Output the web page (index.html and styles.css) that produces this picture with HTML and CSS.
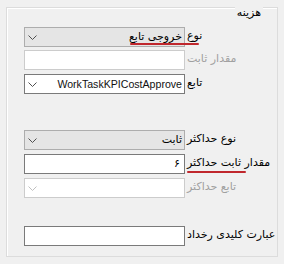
FILE: index.html
```html
<!DOCTYPE html>
<html lang="fa">
<head>
<meta charset="utf-8">
<link rel="stylesheet" href="styles.css">
</head>
<body>
<div class="group">
  <span class="legend" dir="rtl">هزینه</span>
  <div class="form">
    <div class="row r1">
      <div class="combo grey"><svg class="chev" width="9" height="5" viewBox="0 0 9 5"><polyline points="0.5,0.5 4.5,4.5 8.5,0.5"/></svg><span class="val" dir="rtl">خروجی تابع</span></div>
      <span class="lbl" dir="rtl">نوع</span>
    </div>
    <div class="row r2">
      <div class="text disabled"></div>
      <span class="lbl off" dir="rtl">مقدار ثابت</span>
    </div>
    <div class="row r3">
      <div class="combo edit"><svg class="chev" width="9" height="5" viewBox="0 0 9 5"><polyline points="0.5,0.5 4.5,4.5 8.5,0.5"/></svg><span class="val">WorkTaskKPICostApprove</span></div>
      <span class="lbl" dir="rtl">تابع</span>
    </div>
    <div class="row r4">
      <div class="combo grey"><svg class="chev" width="9" height="5" viewBox="0 0 9 5"><polyline points="0.5,0.5 4.5,4.5 8.5,0.5"/></svg><span class="val" dir="rtl">ثابت</span></div>
      <span class="lbl" dir="rtl">نوع حداکثر</span>
    </div>
    <div class="row r5">
      <div class="text"><span class="val" dir="rtl">۶</span></div>
      <span class="lbl" dir="rtl">مقدار ثابت حداکثر</span>
    </div>
    <div class="row r6">
      <div class="combo disabled"><svg class="chev" width="9" height="5" viewBox="0 0 9 5"><polyline points="0.5,0.5 4.5,4.5 8.5,0.5"/></svg></div>
      <span class="lbl off" dir="rtl">تابع حداکثر</span>
    </div>
    <div class="row r7">
      <div class="text"></div>
      <span class="lbl" dir="rtl">عبارت کلیدی رخداد</span>
    </div>
    <span class="mark m1"></span>
    <span class="mark m2"></span>
  </div>
</div>
</body>
</html>
```
FILE: styles.css
```css
html, body {
  margin: 0;
  padding: 0;
  background: #f0f0f0;
  width: 284px;
  height: 264px;
  overflow: hidden;
  font-family: "DejaVu Sans", "Liberation Sans", sans-serif;
  font-size: 11px;
  color: #000;
}
.group {
  position: relative;
  margin: 7px 6px 0 6px;
  height: 248px;
  border: 1px solid #dcdcdc;
  box-shadow: inset 1px 1px 0 #ffffff;
}
.legend {
  position: absolute;
  top: -2px;
  right: 14px;
  padding: 0 2px;
  background: #f0f0f0;
  line-height: 14px;
}
.form {
  position: relative;
  display: flex;
  flex-direction: column;
  padding: 19px 0 0 17px;
}
.row {
  display: flex;
  align-items: center;
  column-gap: 2px;
  height: 20px;
}
.r2 { margin-top: 3px; }
.r3 { margin-top: 4px; }
.r4 { margin-top: 36px; }
.r5 { margin-top: 4px; }
.r6 { margin-top: 4px; }
.r7 { margin-top: 28px; }
.combo, .text {
  box-sizing: border-box;
  width: 161px;
  height: 20px;
  flex: none;
  display: flex;
  align-items: center;
  justify-content: space-between;
  border: 1px solid #7a7a7a;
  background: #fff;
  padding: 0 2px 0 3px;
}
.combo.grey {
  background: #e5e5e5;
  border-color: #adadad;
}
.disabled {
  border-color: #cccccc;
}
.text { justify-content: flex-end; padding-right: 4px; }
.chev {
  flex: none;
  margin-top: 1px;
}
.chev polyline {
  fill: none;
  stroke: #505050;
  stroke-width: 1;
}
.combo.disabled .chev polyline { stroke: #c0c0c0; }
.val {
  white-space: nowrap;
  line-height: 14px;
}
.combo.edit .val {
  font-family: "Liberation Sans", sans-serif;
  font-size: 10.6px;
  color: #111;
}
.lbl {
  white-space: nowrap;
  line-height: 14px;
  margin-top: -2px;
}
.lbl.off { color: #a0a0a0; }
.mark {
  position: absolute;
  height: 2px;
  background: #c0272d;
  border-radius: 1px;
}
.m1 { left: 123px; width: 69px; top: 35px; }
.m2 { left: 180px; width: 59px; top: 163px; }
```
